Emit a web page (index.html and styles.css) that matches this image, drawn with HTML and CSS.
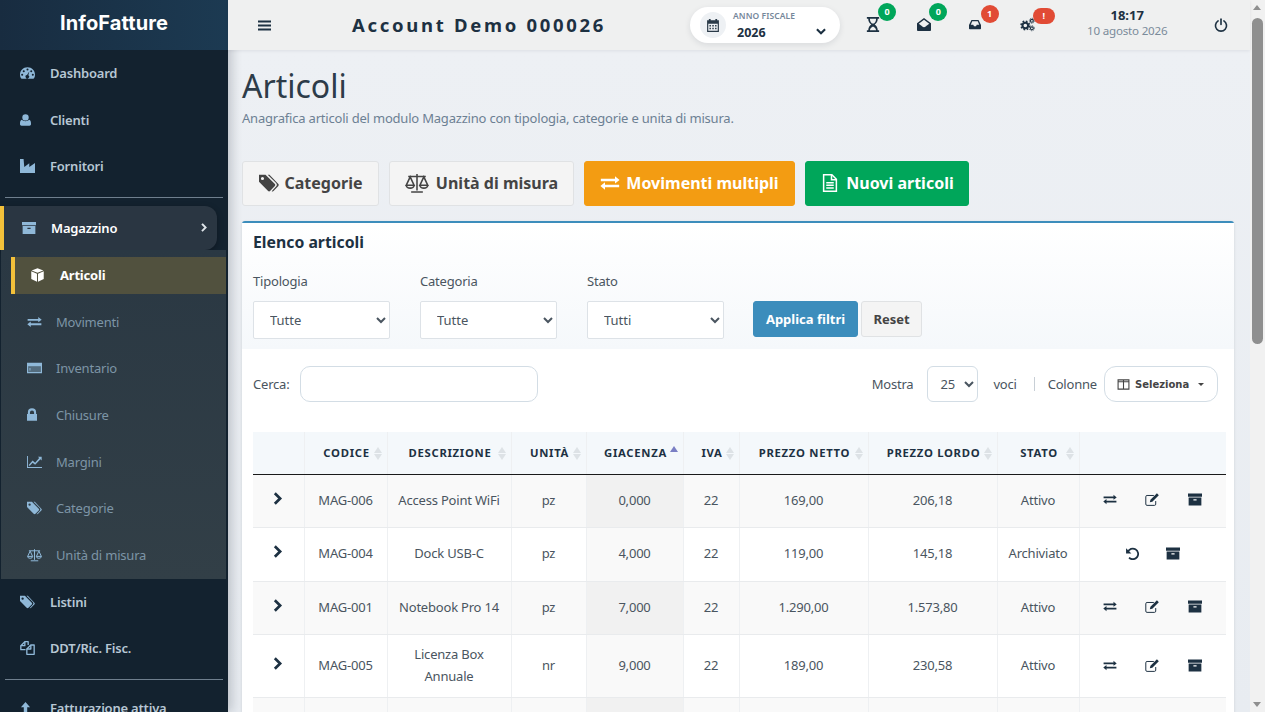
FILE: index.html
```html
<!DOCTYPE html>
<html lang="it">
<head>
    <meta charset="UTF-8">
    <meta name="viewport" content="width=device-width, initial-scale=1.0">
    <title>Articoli - InfoFatture</title>
    <link rel="stylesheet" href="styles.css">
</head>
<body>
    <!-- Icon sprite -->
    <svg class="sprite" xmlns="http://www.w3.org/2000/svg">
        <symbol id="i-dash" viewBox="1 3 22 18"><path fill-rule="evenodd" d="M12 3.500C5.600 3.500 1 8.500 1 14.500c0 2 .5 3.800 1.400 5.300.3.400.7.700 1.200.700h16.800c.5 0 .9-.3 1.200-.7.900-1.500 1.400-3.300 1.400-5.300C23 8.500 18.400 3.500 12 3.500zM12 5.500a1.500 1.500 0 1 1 0 3 1.500 1.500 0 0 1 0-3zM6.500 7.800a1.500 1.500 0 1 1 0 3 1.500 1.500 0 0 1 0-3zM4.200 13a1.500 1.500 0 1 1 0 3 1.500 1.500 0 0 1 0-3zM19.800 13a1.500 1.500 0 1 1 0 3 1.500 1.500 0 0 1 0-3zM17.500 7.800a1.500 1.500 0 1 1 0 3 1.500 1.500 0 0 1 0-3zM14.800 9.500l-1.600 5.700a2.600 2.600 0 1 1-1.900-.4z"/></symbol>
        <symbol id="i-user" viewBox="2.500 2 19 20"><circle cx="12" cy="7.500" r="5.500"/><path d="M5.500 11.500C7 13 9.300 14 12 14s5-1 6.500-2.500c2 .6 3 3 3 6.500v1.500c0 1.600-1.100 2.500-2.600 2.500H5.100c-1.500 0-2.600-.9-2.600-2.500V18c0-3.500 1-5.900 3-6.500z"/></symbol>
        <symbol id="i-factory" viewBox="1 2.500 21 19.500"><path d="M1 2.500h5l1 11 7-5v5l8-5.500V22H1z"/></symbol>
        <symbol id="i-archive" viewBox="1 3 22 19"><path fill-rule="evenodd" d="M1 3h22v5H1zM2 9.500h20V22H2zM9.500 12v2h5v-2z"/></symbol>
        <symbol id="i-cube" viewBox="2 1 20 22"><path d="M12 1.200l9.200 3.700-9.200 3.700-9.200-3.700z"/><path d="M2.200 6.300l9 3.600V22.800l-9-4.500z"/><path d="M21.800 6.300l-9 3.600V22.800l9-4.500z"/></symbol>
        <symbol id="i-exchange" viewBox="0 4 24 17"><path d="M1 7.500h17V4.500L23.500 9 18 13v-2.500H1zM23 14.500H6v-3L.5 16 6 20.500v-3h17z"/></symbol>
        <symbol id="i-card" viewBox="0 3.500 24 17"><path fill-rule="evenodd" d="M0 3.500h24v17H0zM2 9v9.500h20V9zM4 12h1.500v4H4z"/><rect x="2" y="9" width="20" height="9.500" opacity=".4"/></symbol>
        <symbol id="i-lock" viewBox="3.500 1.500 17 21"><path fill-rule="evenodd" d="M12 1.500a7 7 0 0 1 7 7V11h1.500v11.500h-17V11H5V8.500a7 7 0 0 1 7-7zM12 5a3.500 3.500 0 0 0-3.500 3.500V11h7V8.500A3.500 3.500 0 0 0 12 5z"/></symbol>
        <symbol id="i-chart" viewBox="0 3 24 19"><path d="M0 3h1.500v17.500H24V22H0z"/><path d="M3 17l6-7 4 3.500L19.500 6 17.500 4H23.500v6l-2-2-8.500 9-4-3.500-4.500 5H3z"/></symbol>
        <symbol id="i-tags" viewBox="1 3 23 19"><path fill-rule="evenodd" d="M1 3h7.500L19 13.500a2 2 0 0 1 0 2.800L14 21.500a2 2 0 0 1-2.800 0L1 11zM5 5.500a1.800 1.800 0 1 0 0 3.600 1.800 1.800 0 0 0 0-3.600z"/><path d="M11 3h2l10 10.500a2 2 0 0 1 0 2.800l-5 5.200a2 2 0 0 1-2.400.4l5-5.300a3 3 0 0 0 0-4.100z"/></symbol>
        <symbol id="i-scale" viewBox="0 2 24 20.500"><g fill="none" stroke="currentColor" stroke-width="1.600"><path d="M12 3v17M3 5.500h18M6 21.500h12"/><path d="M5 6L1 14.500h8zM19 6l-4 8.500h8z"/><path d="M1 14.500a4 3 0 0 0 8 0M15 14.500a4 3 0 0 0 8 0"/></g></symbol>
        <symbol id="i-files" viewBox="1 2 22 21"><g fill="none" stroke="currentColor" stroke-width="2" stroke-linejoin="round"><path d="M9 15H2v-6l6-6h5v5"/><path d="M8 3v6H2"/><path d="M11 22V14l6-6h5v14z"/><path d="M17 8v6h-6"/></g></symbol>
        <symbol id="i-up" viewBox="4 1 16 21"><path d="M12 1l8 9h-5v12H9V10H4z"/></symbol>
        <symbol id="i-bars" viewBox="1 3.500 22 17"><path d="M1 3.500h22v3.500H1zM1 10.200h22v3.500H1zM1 17h22v3.500H1z"/></symbol>
        <symbol id="i-calendar" viewBox="2 1 20 22"><path fill-rule="evenodd" d="M5 1h3v2h8V1h3v2h3v20H2V3h3zM4 9v12h16V9zM6 11h2.500v2.500H6zM10.800 11h2.500v2.500h-2.500zM15.500 11H18v2.500h-2.500zM6 16h2.500v2.500H6zM10.800 16h2.500v2.500h-2.500zM15.500 16H18v2.500h-2.500z"/></symbol>
        <symbol id="i-hourglass" viewBox="3 1 18 22"><path fill-rule="evenodd" d="M3 1h18v2.500h-2c0 4-2 6.800-4.500 8.500 2.500 1.700 4.500 4.500 4.500 8.500h2V23H3v-2.500h2c0-4 2-6.800 4.500-8.500C7 10.300 5 7.500 5 3.500H3zM7.500 3.500c0 3 1 5.300 3 7h3c2-1.700 3-4 3-7zM7.500 20.500h9c-.3-2.500-2-4.500-4.500-5.500-2.500 1-4.200 3-4.500 5.500z"/></symbol>
        <symbol id="i-envelope" viewBox="0 1 24 22"><path fill-rule="evenodd" d="M12 1L24 10v11.500a1.500 1.500 0 0 1-1.500 1.500h-21A1.500 1.500 0 0 1 0 21.500V10zM12 4L3 10.500l3.500 2.800C8 14.500 10 16.500 12 16.500s4-2 5.500-3.200l3.500-2.800z"/></symbol>
        <symbol id="i-inbox" viewBox="0 3 24 18.500"><path fill-rule="evenodd" d="M5 3h14l5 10v7a1.500 1.500 0 0 1-1.500 1.500h-21A1.500 1.500 0 0 1 0 20v-7zM6.500 5.500L3.500 12.500h5l1.500 3h4l1.500-3h5l-3-7z"/></symbol>
        <symbol id="i-cogs" viewBox="0 0 24 24"><g fill="none" stroke="currentColor"><circle cx="8.500" cy="13.500" r="4.500" stroke-width="3.200"/><circle cx="8.500" cy="13.500" r="6.800" stroke-width="2.400" stroke-dasharray="2.700 2.650"/><circle cx="19" cy="6" r="2.300" stroke-width="1.800"/><circle cx="19" cy="6" r="4" stroke-width="1.400" stroke-dasharray="1.600 1.540"/><circle cx="19" cy="18" r="2.300" stroke-width="1.800"/><circle cx="19" cy="18" r="4" stroke-width="1.400" stroke-dasharray="1.600 1.540"/></g></symbol>
        <symbol id="i-power" viewBox="0 0 24 24"><g fill="none" stroke="currentColor" stroke-width="2.800" stroke-linecap="round"><path d="M12 2v9"/><path d="M7 5a9.500 9.500 0 1 0 10 0"/></g></symbol>
        <symbol id="i-chevron" viewBox="0 0 24 24"><path fill="none" stroke="currentColor" stroke-width="5" stroke-linecap="square" d="M7 4l8 8-8 8"/></symbol>
        <symbol id="i-file" viewBox="2 0 20 24"><g fill="none" stroke="currentColor" stroke-width="2"><path d="M3.500 1h11l6 6v16h-17z"/><path d="M14 1v6.500h6.500"/><path d="M7 11.500h10M7 15h10M7 18.500h10"/></g></symbol>
        <symbol id="i-edit" viewBox="1 1 22 21"><path fill="none" stroke="currentColor" stroke-width="1.600" d="M18 14v5a2 2 0 0 1-2 2H4a2 2 0 0 1-2-2V7a2 2 0 0 1 2-2h11"/><path d="M20 1.500l3 3-10.500 10.500-4 1 1-4z"/></symbol>
        <symbol id="i-undo" viewBox="1 1 22 22"><path fill="none" stroke="currentColor" stroke-width="3" d="M5 9.500A9 9 0 1 1 7 19"/><path d="M2 3l9 9H2z"/></symbol>
        <symbol id="i-columns" viewBox="0 0 24 24"><path fill="none" stroke="currentColor" stroke-width="2" d="M2 3.500h20v17H2zM12 3.500v17M2 7h20"/></symbol>
    </svg>

    <div class="app">
        <!-- Sidebar -->
        <aside class="sidebar">
            <div class="logo">InfoFatture</div>
            <nav class="menu">
                <a class="menu-item"><svg class="ico"><use href="#i-dash"/></svg>Dashboard</a>
                <a class="menu-item"><svg class="ico ico-narrow"><use href="#i-user"/></svg>Clienti</a>
                <a class="menu-item"><svg class="ico"><use href="#i-factory"/></svg>Fornitori</a>
                <hr class="menu-sep">
                <a class="menu-item menu-open"><svg class="ico"><use href="#i-archive"/></svg>Magazzino<svg class="menu-arrow"><use href="#i-chevron"/></svg></a>
                <div class="submenu">
                    <a class="sub-item sub-active"><svg class="ico"><use href="#i-cube"/></svg>Articoli</a>
                    <a class="sub-item"><svg class="ico"><use href="#i-exchange"/></svg>Movimenti</a>
                    <a class="sub-item"><svg class="ico"><use href="#i-card"/></svg>Inventario</a>
                    <a class="sub-item"><svg class="ico ico-narrow"><use href="#i-lock"/></svg>Chiusure</a>
                    <a class="sub-item"><svg class="ico"><use href="#i-chart"/></svg>Margini</a>
                    <a class="sub-item"><svg class="ico"><use href="#i-tags"/></svg>Categorie</a>
                    <a class="sub-item"><svg class="ico"><use href="#i-scale"/></svg>Unità di misura</a>
                </div>
                <a class="menu-item"><svg class="ico"><use href="#i-tags"/></svg>Listini</a>
                <a class="menu-item"><svg class="ico"><use href="#i-files"/></svg>DDT/Ric. Fisc.</a>
                <hr class="menu-sep menu-sep-low">
                <a class="menu-item"><svg class="ico ico-narrow"><use href="#i-up"/></svg>Fatturazione attiva</a>
            </nav>
        </aside>

        <div class="main">
            <!-- Top bar -->
            <header class="topbar">
                <svg class="top-bars"><use href="#i-bars"/></svg>
                <div class="account">Account Demo 000026</div>
                <div class="year-pill">
                    <span class="year-ico"><svg><use href="#i-calendar"/></svg></span>
                    <div class="year-text">
                        <span class="year-label">ANNO FISCALE</span>
                        <span class="year-value">2026</span>
                    </div>
                    <svg class="year-chevron"><use href="#i-chevron"/></svg>
                </div>
                <div class="notifs">
                    <div class="notif"><svg><use href="#i-hourglass"/></svg><span class="badge badge-green">0</span></div>
                    <div class="notif"><svg><use href="#i-envelope"/></svg><span class="badge badge-green">0</span></div>
                    <div class="notif"><svg class="inbox"><use href="#i-inbox"/></svg><span class="badge badge-red">1</span></div>
                    <div class="notif"><svg class="cogs"><use href="#i-cogs"/></svg><span class="badge badge-red badge-wide">!</span></div>
                </div>
                <div class="clock">
                    <strong>18:17</strong>
                    <span>10 agosto 2026</span>
                </div>
                <svg class="top-power"><use href="#i-power"/></svg>
            </header>

            <!-- Page content -->
            <main class="content">
                <h1>Articoli</h1>
                <p class="subtitle">Anagrafica articoli del modulo Magazzino con tipologia, categorie e unita di misura.</p>

                <div class="actions">
                    <button class="btn-big btn-light"><svg><use href="#i-tags"/></svg>Categorie</button>
                    <button class="btn-big btn-light"><svg><use href="#i-scale"/></svg>Unità di misura</button>
                    <button class="btn-big btn-orange"><svg><use href="#i-exchange"/></svg>Movimenti multipli</button>
                    <button class="btn-big btn-green"><svg><use href="#i-file"/></svg>Nuovi articoli</button>
                </div>

                <section class="card">
                    <div class="card-head">
                        <h2>Elenco articoli</h2>
                        <form class="filters">
                            <label class="filter">Tipologia
                                <select><option>Tutte</option></select>
                            </label>
                            <label class="filter">Categoria
                                <select><option>Tutte</option></select>
                            </label>
                            <label class="filter">Stato
                                <select><option>Tutti</option></select>
                            </label>
                            <div class="filter-btns">
                                <button type="button" class="btn-apply">Applica filtri</button>
                                <button type="button" class="btn-reset">Reset</button>
                            </div>
                        </form>
                    </div>

                    <div class="table-tools">
                        <label class="search">Cerca: <input type="text"></label>
                        <div class="tools-right">
                            <span>Mostra</span>
                            <select class="page-size"><option>25</option></select>
                            <span>voci</span>
                            <span class="tools-sep"></span>
                            <span>Colonne</span>
                            <button class="btn-cols"><svg><use href="#i-columns"/></svg>Seleziona<i class="caret"></i></button>
                        </div>
                    </div>

                    <table class="grid">
                        <colgroup>
                            <col class="c-exp"><col class="c-code"><col class="c-desc"><col class="c-unit"><col class="c-qty">
                            <col class="c-iva"><col class="c-price"><col class="c-price"><col class="c-state"><col>
                        </colgroup>
                        <thead>
                            <tr>
                                <th></th>
                                <th class="sort">CODICE</th>
                                <th class="sort">DESCRIZIONE</th>
                                <th class="sort">UNITÀ</th>
                                <th class="sort sort-asc">GIACENZA</th>
                                <th class="sort">IVA</th>
                                <th class="sort">PREZZO NETTO</th>
                                <th class="sort">PREZZO LORDO</th>
                                <th class="sort">STATO</th>
                                <th></th>
                            </tr>
                        </thead>
                        <tbody>
                            <tr class="odd">
                                <td><svg class="row-exp"><use href="#i-chevron"/></svg></td>
                                <td>MAG-006</td><td>Access Point WiFi</td><td>pz</td><td class="qty">0,000</td><td>22</td><td>169,00</td><td>206,18</td><td>Attivo</td>
                                <td><div class="row-acts"><svg><use href="#i-exchange"/></svg><svg class="edit"><use href="#i-edit"/></svg><svg><use href="#i-archive"/></svg></div></td>
                            </tr>
                            <tr>
                                <td><svg class="row-exp"><use href="#i-chevron"/></svg></td>
                                <td>MAG-004</td><td>Dock USB-C</td><td>pz</td><td class="qty">4,000</td><td>22</td><td>119,00</td><td>145,18</td><td>Archiviato</td>
                                <td><div class="row-acts row-acts-two"><svg class="undo"><use href="#i-undo"/></svg><svg><use href="#i-archive"/></svg></div></td>
                            </tr>
                            <tr class="odd">
                                <td><svg class="row-exp"><use href="#i-chevron"/></svg></td>
                                <td>MAG-001</td><td>Notebook Pro 14</td><td>pz</td><td class="qty">7,000</td><td>22</td><td>1.290,00</td><td>1.573,80</td><td>Attivo</td>
                                <td><div class="row-acts"><svg><use href="#i-exchange"/></svg><svg class="edit"><use href="#i-edit"/></svg><svg><use href="#i-archive"/></svg></div></td>
                            </tr>
                            <tr class="tall">
                                <td><svg class="row-exp"><use href="#i-chevron"/></svg></td>
                                <td>MAG-005</td><td>Licenza Box<br>Annuale</td><td>nr</td><td class="qty">9,000</td><td>22</td><td>189,00</td><td>230,58</td><td>Attivo</td>
                                <td><div class="row-acts"><svg><use href="#i-exchange"/></svg><svg class="edit"><use href="#i-edit"/></svg><svg><use href="#i-archive"/></svg></div></td>
                            </tr>
                            <tr class="odd">
                                <td></td><td></td><td></td><td></td><td class="qty"></td><td></td><td></td><td></td><td></td><td></td>
                            </tr>
                        </tbody>
                    </table>
                </section>
            </main>
        </div>

        <!-- Page scrollbar -->
        <div class="scrollbar">
            <i class="sb-up"></i>
            <div class="sb-thumb"></div>
            <i class="sb-down"></i>
        </div>
    </div>
</body>
</html>
```

FILE: styles.css
```css
* {
    margin: 0;
    padding: 0;
    box-sizing: border-box;
}

:root {
    --navy: #13222f;
    --ink: #1d3142;
    --text: #4a5560;
    --yellow: #f3c13a;
    --icon-blue: #8fb8d8;
    --line: #eef0f2;
}

body {
    font-family: "Noto Sans", "Open Sans", sans-serif;
    font-size: 13px;
    letter-spacing: -0.2px;
    color: var(--text);
    height: 100vh;
    overflow: hidden;
    background: #e9edf2;
}

.sprite {
    display: none;
}

svg {
    fill: currentColor;
}

.app {
    display: flex;
    height: 712px;
    overflow: hidden;
}

/* Sidebar */
.sidebar {
    width: 228px;
    flex: none;
    background: var(--navy);
    overflow: hidden;
    z-index: 2;
    box-shadow: 4px 0 10px rgba(20, 30, 45, 0.2);
}

.logo {
    height: 50px;
    line-height: 47px;
    text-align: center;
    font-family: "Inter", sans-serif;
    font-size: 20px;
    font-weight: 700;
    letter-spacing: 0.1px;
    color: #fff;
    background: linear-gradient(90deg, #182c40, #1c3a52);
}

.menu {
    display: flex;
    flex-direction: column;
}

.menu-item {
    display: flex;
    align-items: center;
    height: 46.5px;
    padding-left: 20px;
    font-weight: 600;
    color: #b7c7d4;
}

.ico {
    width: 15px;
    height: 14px;
    margin-right: 15px;
    flex: none;
    color: var(--icon-blue);
    overflow: visible;
}

.menu-item .ico-narrow {
    width: 11px;
    height: 12px;
    margin-right: 19px;
}

.menu-sep {
    border: 0;
    border-top: 1px solid #6f7f8e;
    margin: 7px 5px 8px;
}

.menu-sep-low {
    margin: 7px 5px 5px;
}

.menu-open {
    height: 44px;
    margin-right: 11px;
    padding-left: 18px;
    color: #fff;
    background: #2a3642;
    border-left: 4px solid var(--yellow);
    border-radius: 0 12px 12px 0;
    box-shadow: 0 2px 6px rgba(0, 0, 0, 0.3);
}

.menu-open .ico {
    width: 14px;
    margin-right: 15px;
}

.menu-arrow {
    width: 9px;
    height: 11px;
    margin-left: auto;
    margin-right: 8px;
    color: #dfe5ea;
}

.submenu {
    margin: 0 2px 0 1px;
    padding: 7px 0 0 10px;
    height: 329px;
    background: linear-gradient(180deg, #2a3843, #323f47);
}

.sub-item {
    display: flex;
    align-items: center;
    height: 46.6px;
    padding-left: 16px;
    color: #7d95a6;
}

.sub-item .ico {
    width: 15px;
    margin-right: 14px;
}

.sub-item .ico-narrow {
    width: 10px;
    height: 13px;
    margin-right: 19px;
}

.sub-active {
    height: 37px;
    margin-bottom: 5px;
    padding-left: 15px;
    color: #fff;
    font-weight: 700;
    background: #51513e;
    border-left: 4px solid var(--yellow);
}

.sub-active .ico {
    margin-right: 15px;
    color: #fff;
}

/* Main column */
.main {
    flex: 1;
    min-width: 0;
    display: flex;
    flex-direction: column;
}

.topbar {
    height: 50px;
    flex: none;
    display: flex;
    align-items: center;
    background: #eff0f0;
    box-shadow: 0 1px 3px rgba(20, 30, 45, 0.08);
    z-index: 3;
}

.top-bars {
    width: 13px;
    height: 11px;
    margin-left: 30px;
    color: var(--ink);
}

.account {
    width: 338px;
    margin-left: 81px;
    margin-top: -2px;
    font-size: 18.5px;
    font-weight: 700;
    letter-spacing: 2.7px;
    color: var(--ink);
}

.year-pill {
    width: 150px;
    height: 36px;
    display: flex;
    align-items: center;
    padding-left: 10px;
    background: #fff;
    border-radius: 18px;
    box-shadow: 0 2px 6px rgba(20, 30, 45, 0.1);
}

.year-ico {
    width: 26px;
    height: 26px;
    flex: none;
    display: flex;
    align-items: center;
    justify-content: center;
    background: #eef1f4;
    border-radius: 50%;
    color: #2a3a48;
}

.year-ico svg {
    width: 12px;
    height: 13px;
}

.year-text {
    display: flex;
    flex-direction: column;
    margin-left: 7px;
    margin-top: 1px;
    width: 66px;
}

.year-label {
    font-size: 8.5px;
    font-weight: 600;
    letter-spacing: 0.1px;
    color: #75879a;
    line-height: 14px;
    white-space: nowrap;
}

.year-value {
    padding-left: 4px;
    font-size: 12.5px;
    font-weight: 700;
    letter-spacing: 0;
    line-height: 20px;
    color: var(--ink);
}

.year-chevron {
    width: 10px;
    height: 10px;
    margin-left: 17px;
    margin-top: 13px;
    transform: rotate(90deg);
    color: var(--ink);
}

.notifs {
    display: flex;
    margin-left: 26px;
    margin-top: -1px;
}

.notif {
    position: relative;
    width: 51.3px;
    height: 24px;
    display: flex;
    align-items: center;
    color: var(--ink);
}

.notif svg {
    width: 14px;
    height: 15px;
}

.notif .inbox {
    width: 12px;
    height: 11px;
}

.notif .cogs {
    width: 15px;
}

.badge {
    position: absolute;
    left: 12px;
    top: -10px;
    width: 18px;
    height: 18px;
    border-radius: 9px;
    font-size: 9px;
    font-weight: 700;
    letter-spacing: 0;
    line-height: 18px;
    text-align: center;
    color: #fff;
}

.badge-green {
    background: #00a65a;
}

.badge-red {
    top: -8px;
    background: #e14b35;
}

.badge-wide {
    left: 13px;
    top: -5px;
    width: 22px;
    height: 16px;
    line-height: 16px;
}

.clock {
    width: 90px;
    margin-left: 11px;
    padding-bottom: 4px;
    display: flex;
    flex-direction: column;
    align-items: center;
    line-height: 16px;
}

.clock strong {
    font-size: 13px;
    letter-spacing: 0;
    color: var(--ink);
}

.clock span {
    font-size: 11.6px;
    color: #7a8b9a;
    white-space: nowrap;
}

.top-power {
    width: 14px;
    height: 14px;
    margin-left: 42px;
    color: var(--ink);
}

/* Page content */
.content {
    flex: 1;
    min-height: 0;
    padding: 15px 16px 0 14px;
    background: linear-gradient(180deg, #edf0f4, #e8ecf1);
}

h1 {
    font-size: 32px;
    font-weight: 400;
    letter-spacing: 0;
    line-height: 42px;
    color: #2d3c49;
}

.subtitle {
    margin-top: 1px;
    line-height: 20px;
    color: #6c8093;
}

.actions {
    display: flex;
    gap: 10px;
    margin-top: 33px;
}

.btn-big {
    height: 45px;
    padding-bottom: 2px;
    display: flex;
    align-items: center;
    justify-content: center;
    gap: 6px;
    border-radius: 3px;
    font-family: inherit;
    font-size: 16px;
    font-weight: 700;
}

.btn-big svg {
    width: 20px;
    height: 18px;
}

.btn-light {
    background: #f4f4f4;
    border: 1px solid #e0e2e4;
    color: #444;
}

.btn-light:nth-child(1) {
    width: 137px;
}

.btn-light:nth-child(2) {
    width: 185px;
    gap: 7px;
}

.btn-light:nth-child(2) svg {
    width: 24px;
    height: 20px;
}

.btn-orange {
    width: 211px;
    border: 1px solid #f39c12;
    background: #f39c12;
    color: #fff;
}

.btn-green {
    width: 164px;
    border: 1px solid #00a65a;
    background: #00a65a;
    color: #fff;
}

/* Card */
.card {
    margin-top: 15px;
    background: #fff;
    border-top: 2px solid #3c8dbc;
    border-radius: 3px 3px 0 0;
    box-shadow: 0 1px 3px rgba(20, 30, 45, 0.12);
}

.card-head {
    height: 126px;
    padding: 9px 11px 0;
    background: linear-gradient(180deg, #fff, #f5f8fb);
}

h2 {
    font-size: 15.8px;
    font-weight: 700;
    letter-spacing: 0;
    line-height: 20px;
    color: var(--ink);
}

.filters {
    display: flex;
    align-items: flex-end;
    margin-top: 19px;
}

.filter {
    display: flex;
    flex-direction: column;
    gap: 10px;
    width: 137px;
    margin-right: 30px;
    line-height: 20px;
}

select {
    font-family: inherit;
    color: var(--text);
}

.filter select {
    height: 38px;
    padding-left: 12px;
    font-size: 13px;
    background: #fff;
    border: 1px solid #dde2e7;
    border-radius: 2px;
}

.filter-btns {
    display: flex;
    gap: 3px;
    margin-bottom: 2px;
    margin-left: -1px;
}

.btn-apply,
.btn-reset {
    height: 36px;
    border-radius: 3px;
    font-family: inherit;
    font-size: 13px;
    font-weight: 700;
}

.btn-apply {
    width: 105px;
    background: #3c8dbc;
    border: 1px solid #3c8dbc;
    color: #fff;
}

.btn-reset {
    width: 61px;
    background: #f4f4f4;
    border: 1px solid #e0e2e4;
    color: #444;
}

/* Table tools */
.table-tools {
    display: flex;
    align-items: flex-start;
    justify-content: space-between;
    height: 83px;
    padding: 17px 16px 0 11px;
}

.search {
    display: flex;
    align-items: center;
    gap: 11px;
    height: 36px;
}

.search input {
    width: 238px;
    height: 36px;
    border: 1px solid #d3dde5;
    border-radius: 10px;
    background: #fff;
}

.tools-right {
    display: flex;
    align-items: center;
    height: 36px;
}

.page-size {
    width: 51px;
    height: 36px;
    margin: 0 15px 0 14px;
    padding-left: 8px;
    font-size: 13px;
    background: #fff;
    border: 1px solid #d3dde5;
    border-radius: 6px;
}

.tools-sep {
    width: 1px;
    height: 14px;
    margin: 0 13px 0 17px;
    background: #c8cfd6;
}

.btn-cols {
    display: flex;
    align-items: center;
    width: 114px;
    height: 36px;
    margin-left: 7px;
    padding-left: 12px;
    font-family: "DejaVu Sans", sans-serif;
    font-size: 10px;
    font-weight: 700;
    background: #fff;
    border: 1px solid #d3dde5;
    border-radius: 12px;
    color: #444;
    white-space: nowrap;
}

.btn-cols svg {
    width: 13px;
    height: 13px;
    margin-right: 5px;
    flex: none;
}

.caret {
    width: 0;
    height: 0;
    margin-left: 9px;
    border: 3px solid transparent;
    border-top: 3px solid #444;
    border-bottom: 0;
}

/* Table */
.grid {
    width: 973px;
    margin-left: 11px;
    table-layout: fixed;
    border-collapse: collapse;
    text-align: center;
}

.c-exp { width: 51px; }
.c-code { width: 83px; }
.c-desc { width: 124px; }
.c-unit { width: 75px; }
.c-qty { width: 97px; }
.c-iva { width: 56px; }
.c-price { width: 129px; }
.c-state { width: 82px; }

.grid th {
    position: relative;
    height: 42px;
    font-size: 11.3px;
    font-weight: 700;
    letter-spacing: 0.7px;
    color: var(--ink);
    background: #f4f8fb;
    border-right: 1px solid var(--line);
    border-bottom: 1.5px solid #1a1a1a;
    white-space: nowrap;
}

.grid td {
    height: 53.5px;
    padding-bottom: 2px;
    line-height: 22px;
    border-right: 1px solid var(--line);
    border-bottom: 1px solid #e9ebed;
}

.grid th:last-child,
.grid td:last-child {
    border-right: 0;
}

.odd td {
    background: #f9f9f9;
}

.grid td.qty {
    background: #f9f9f9;
}

.odd td.qty {
    background: #f1f1f1;
}

.tall td {
    height: 63px;
}

.sort {
    padding-left: 2px;
}

/* up/down sort arrows */
.sort::before,
.sort::after {
    content: "";
    position: absolute;
    right: 5px;
    width: 0;
    height: 0;
    border: 4px solid transparent;
    border-bottom-width: 6px;
    border-top-width: 6px;
}

.sort::before {
    top: 15px;
    border-bottom-color: #dde2e6;
    border-top: 0;
}

.sort::after {
    top: 22px;
    border-top-color: #dde2e6;
    border-bottom: 0;
}

.sort-asc::before {
    top: 14px;
    border-bottom-color: #7a7fc4;
}

.sort-asc::after {
    display: none;
}

.row-exp {
    width: 13px;
    height: 13px;
    margin-top: 3px;
    color: var(--ink);
}

.row-acts {
    display: flex;
    justify-content: space-between;
    align-items: center;
    padding: 0 24px 0 23px;
    color: var(--ink);
}

.row-acts svg {
    width: 14px;
    height: 13px;
}

.row-acts-two {
    justify-content: center;
    gap: 27px;
    padding-right: 24px;
}

/* Scrollbar */
.scrollbar {
    position: relative;
    width: 15px;
    flex: none;
    background: #f1f1f1;
}

.sb-thumb {
    position: absolute;
    left: 2px;
    top: 18px;
    width: 11px;
    height: 326px;
    background: #8f8f8f;
    border-radius: 6px;
}

.sb-up,
.sb-down {
    position: absolute;
    left: 3px;
    width: 0;
    height: 0;
    border: 4.5px solid transparent;
}

.sb-up {
    top: 5px;
    border-bottom: 5px solid #8f8f8f;
    border-top: 0;
}

.sb-down {
    bottom: 5px;
    border-top: 5px solid #8f8f8f;
    border-bottom: 0;
}
```
